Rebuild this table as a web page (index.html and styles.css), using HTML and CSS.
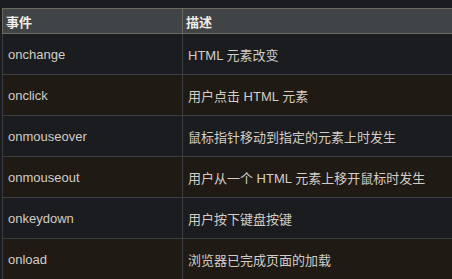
FILE: index.html
```html
<!DOCTYPE html>
<html lang="zh">
<head>
<meta charset="utf-8">
<link rel="stylesheet" href="styles.css">
</head>
<body>
<table class="ev">
  <thead>
    <tr><th class="c1">事件</th><th>描述</th></tr>
  </thead>
  <tbody>
    <tr class="odd"><td class="c1">onchange</td><td>HTML 元素改变</td></tr>
    <tr class="even"><td class="c1">onclick</td><td>用户点击 HTML 元素</td></tr>
    <tr class="odd"><td class="c1">onmouseover</td><td>鼠标指针移动到指定的元素上时发生</td></tr>
    <tr class="even"><td class="c1">onmouseout</td><td>用户从一个 HTML 元素上移开鼠标时发生</td></tr>
    <tr class="odd"><td class="c1">onkeydown</td><td>用户按下键盘按键</td></tr>
    <tr class="even"><td class="c1">onload</td><td>浏览器已完成页面的加载</td></tr>
  </tbody>
</table>
</body>
</html>
```
FILE: styles.css
```css
html, body {
  margin: 0;
  background: #1b1c1f;
  overflow: hidden;
}
body {
  padding: 8px 0 0 2px;
  font-family: "Liberation Sans", Arial, "Noto Sans CJK SC", sans-serif;
  font-size: 13px;
  color: #d2cdc5;
}
.ev {
  border-collapse: collapse;
  width: 451px;
  table-layout: fixed;
}
.ev th {
  background: #404447;
  color: #f0ede8;
  font-weight: bold;
  text-align: left;
  height: 24px;
  padding: 0 3px;
  border: 1px solid #6e695f;
  border-right: 0;
  font-size: 13px;
}
.ev th.c1 {
  width: 173px;
  border-right: 1px solid #6e695f;
}
.ev td {
  height: 40px;
  padding: 0 5px;
  border: 1px solid #3b3e41;
  border-right: 0;
  vertical-align: middle;
}
.ev td.c1 {
  width: 169px;
  border-right: 1px solid #3b3e41;
}
.odd td { background: #1b1c1f; }
.even td { background: #201a15; }
```
